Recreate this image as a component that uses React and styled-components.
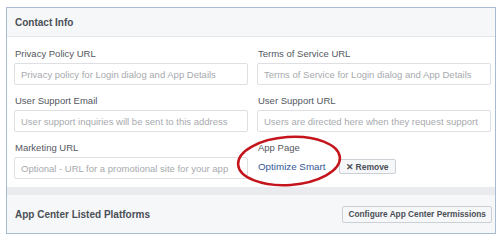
import styled, { createGlobalStyle } from 'styled-components';

const GlobalStyle = createGlobalStyle`
  body {
    margin: 0;
    background: #ffffff;
    font-family: 'Liberation Sans', Arial, sans-serif;
  }
`;

const fields = [
    { label: 'Privacy Policy URL', placeholder: 'Privacy policy for Login dialog and App Details' },
    { label: 'Terms of Service URL', placeholder: 'Terms of Service for Login dialog and App Details' },
    { label: 'User Support Email', placeholder: 'User support inquiries will be sent to this address' },
    { label: 'User Support URL', placeholder: 'Users are directed here when they request support' },
    { label: 'Marketing URL', placeholder: 'Optional - URL for a promotional site for your app' },
];

const App = () => {

    return (
        <Page>
            <GlobalStyle />
            <Frame>

                <Header>Contact Info</Header>

                <FieldGrid>
                    {fields.map((it) => (
                        <Field key={it.label}>
                            <Label>{it.label}</Label>
                            <Input placeholder={it.placeholder} />
                        </Field>
                    ))}

                    <Field>
                        <Label>App Page</Label>
                        <PageRow>
                            <PageLink>Optimize Smart</PageLink>
                            <SmallButton>
                                <span className='x'>✕</span> Remove
                            </SmallButton>
                        </PageRow>
                    </Field>
                </FieldGrid>

                <Separator />

                <Footer>
                    <FooterTitle>App Center Listed Platforms</FooterTitle>
                    <SmallButton tall>Configure App Center Permissions</SmallButton>
                </Footer>

                <Circle viewBox='0 0 110 56'>
                    <ellipse cx='55' cy='28' rx='51' ry='24' />
                </Circle>

            </Frame>
        </Page>
    );
};

const Page = styled.div`
  padding: 7px 4px 0 6px;
`;

const Frame = styled.div`
  position: relative;
  width: 490px;
  border: 1px solid #a9bbd3;
  box-sizing: border-box;
  background: #ffffff;
`;

const Header = styled.div`
  height: 28px;
  display: flex;
  align-items: center;
  padding-left: 8px;
  background: #f6f7f9;
  border-bottom: 1px solid #e5e6e9;
  font-size: 10px;
  font-weight: bold;
  color: #4b4f56;
`;

const FieldGrid = styled.div`
  display: grid;
  grid-template-columns: 234px 234px;
  column-gap: 9px;
  row-gap: 9px;
  padding: 10px 5px 8px 7px;
`;

const Field = styled.div`
  display: flex;
  flex-direction: column;
`;

const Label = styled.div`
  height: 13px;
  line-height: 13px;
  margin: 0 0 3px 1px;
  font-size: 9.5px;
  color: #53575e;
`;

const Input = styled.input`
  box-sizing: border-box;
  height: 22px;
  width: 100%;
  padding: 0 6px;
  border: 1px solid #dddfe2;
  border-radius: 2px;
  font-family: 'Liberation Sans', Arial, sans-serif;
  font-size: 9.5px;
  color: #1d2129;
  background: #ffffff;
  outline: none;

  &::placeholder {
    color: #a7aaae;
  }
`;

const PageRow = styled.div`
  display: flex;
  align-items: center;
  height: 19px;
  gap: 13px;
`;

const PageLink = styled.span`
  font-size: 9.8px;
  color: #365899;
  margin-left: 1px;
`;

const SmallButton = styled.button`
  box-sizing: border-box;
  height: ${(p) => (p.tall ? '17px' : '15px')};
  padding: 0 ${(p) => (p.tall ? '5px' : '6px')};
  display: inline-flex;
  align-items: center;
  gap: 2px;
  border: 1px solid #ccd0d5;
  border-radius: 2px;
  background: #f6f7f9;
  font-family: 'Liberation Sans', Arial, sans-serif;
  font-size: ${(p) => (p.tall ? '8.3px' : '8.5px')};
  font-weight: bold;
  color: #4b4f56;
  cursor: pointer;

  .x {
    font-size: 9px;
  }
`;

const Separator = styled.div`
  height: 8px;
  background: #e9ebee;
`;

const Footer = styled.div`
  height: 38px;
  display: flex;
  align-items: center;
  justify-content: space-between;
  padding: 0 3px 0 8px;
  background: #f6f7f9;
`;

const FooterTitle = styled.span`
  font-size: 10px;
  font-weight: bold;
  color: #4b4f56;
`;

const Circle = styled.svg`
  position: absolute;
  left: 227px;
  top: 125px;
  width: 110px;
  height: 56px;
  transform: rotate(-4deg);
  overflow: visible;
  pointer-events: none;

  ellipse {
    fill: none;
    stroke: #c4151c;
    stroke-width: 2.5;
  }
`;

export default App;
